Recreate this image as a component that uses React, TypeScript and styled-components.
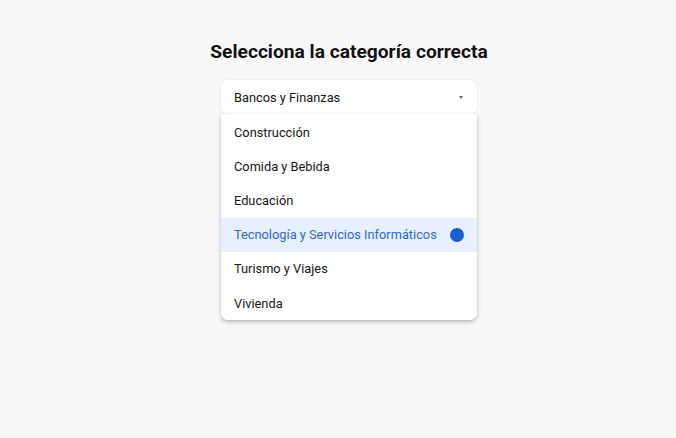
import React from "react";
import styled, { createGlobalStyle } from "styled-components";

const Global = createGlobalStyle`
  html, body { margin: 0; padding: 0; background: #f8f8f8; }
  body { font-family: Roboto, "Noto Sans", sans-serif; color: #1c1c1c; }
`;

const Page = styled.div`
  display: flex;
  flex-direction: column;
  align-items: center;
  padding: 40px 0 0 22px;
  min-height: 438px;
  box-sizing: border-box;
`;

const Title = styled.h1`
  margin: 0 0 16px;
  font-size: 19.2px;
  font-weight: 700;
  line-height: 24px;
  color: #111;
`;

const Field = styled.div`
  position: relative;
  width: 256px;
`;

const Trigger = styled.div`
  height: 34px;
  box-sizing: border-box;
  display: flex;
  align-items: center;
  justify-content: space-between;
  padding: 0 14px 0 13px;
  background: #fff;
  border-radius: 7px;
  box-shadow: 0 0 2px rgba(0, 0, 0, 0.12);
  font-size: 12.8px;
  color: #161616;
`;

const Caret = styled.span`
  width: 0;
  height: 0;
  border-left: 2.5px solid transparent;
  border-right: 2.5px solid transparent;
  border-top: 3px solid #666;
`;

const Menu = styled.ul`
  position: absolute;
  top: 34px;
  left: 0;
  right: 0;
  margin: 0;
  padding: 1px 0 0;
  list-style: none;
  background: #fff;
  border-radius: 0 0 7px 7px;
  box-shadow: 0 2px 5px rgba(0, 0, 0, 0.22), 0 1px 2px rgba(0, 0, 0, 0.1);
  overflow: hidden;
`;

const Item = styled.li<{ $active?: boolean }>`
  height: 34.2px;
  display: flex;
  align-items: center;
  justify-content: space-between;
  padding: 0 13px;
  font-size: 12.8px;
  white-space: nowrap;
  color: ${(p) => (p.$active ? "#2f6bc8" : "#161616")};
  background: ${(p) => (p.$active ? "#e8f0fd" : "#fff")};
`;

const Dot = styled.span`
  flex: none;
  width: 14px;
  height: 14px;
  border-radius: 50%;
  background: #1a5fcf;
`;

const items = [
  "Construcción",
  "Comida y Bebida",
  "Educación",
  "Tecnología y Servicios Informáticos",
  "Turismo y Viajes",
  "Vivienda",
];

export default function App() {
  return (
    <>
      <Global />
      <Page>
        <Title>Selecciona la categoría correcta</Title>
        <Field>
          <Trigger>
            <span>Bancos y Finanzas</span>
            <Caret />
          </Trigger>
          <Menu>
            {items.map((it, i) => (
              <Item key={it} $active={i === 3}>
                <span>{it}</span>
                {i === 3 && <Dot />}
              </Item>
            ))}
          </Menu>
        </Field>
      </Page>
    </>
  );
}
